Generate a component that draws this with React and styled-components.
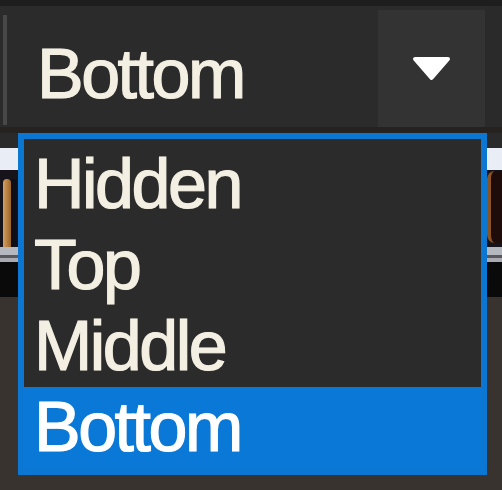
import React from "react";
import styled, { createGlobalStyle } from "styled-components";

const Global = createGlobalStyle`
  html, body { margin: 0; padding: 0; background: #2b2b2b; }
  #root { width: 502px; height: 490px; }
`;

const Page = styled.div`
  position: relative;
  width: 502px;
  height: 490px;
  overflow: hidden;
  display: flex;
  flex-direction: column;
  background: #2b2b2b;
  font-family: "Liberation Sans", Arial, sans-serif;
`;

const TopEdge = styled.div`
  height: 6px;
  background: #1e1e1e;
`;

const ComboRow = styled.div`
  height: 121px;
  display: flex;
  background: #2b2b2b;
  padding-left: 3px;
`;

const LeftRule = styled.div`
  width: 4px;
  margin: 9px 0 2px;
  background: #484848;
`;

const Value = styled.div`
  flex: 1;
  padding: 28px 0 0 30px;
  font-size: 70px;
  line-height: 80px;
  letter-spacing: -2.5px;
  color: #f3efe2;
  -webkit-text-stroke: 1.2px #f3efe2;
  text-shadow: 0 0 1px rgba(243, 239, 226, 0.6);
`;

const DropButton = styled.div`
  width: 107px;
  margin-top: 4px;
  background: #333333;
  display: flex;
  align-items: center;
  justify-content: center;
`;

const RightGap = styled.div`
  width: 17px;
  background: #2a2a2a;
`;

const Separator = styled.div`
  height: 6px;
  background: #26221f;
`;

const Band = styled.div`
  height: ${(p) => p.h}px;
  background: ${(p) => p.bg};
  flex: ${(p) => (p.grow ? 1 : "none")};
  display: flex;
  justify-content: space-between;
  align-items: flex-end;
  overflow: hidden;
`;

const StripeBand = styled.div`
  height: 15px;
  background: linear-gradient(#b6b8c0 0 8px, #58585e 8px 11px, #a9aab2 11px);
`;

const LeftGlyphPiece = styled.div`
  margin-left: 3px;
  width: 8px;
  height: 68px;
  border-radius: 6px 6px 0 0;
  background: linear-gradient(90deg, #d4a060, #9a6428);
  box-shadow: 6px 0 0 #0e0e18;
`;

const RightGlyphPiece = styled.div`
  width: 15px;
  height: 72px;
  border-left: 4px solid #8a5424;
  border-radius: 8px 0 0 8px;
  background: #1e0c0a;
  box-sizing: border-box;
  margin-bottom: 4px;
`;

const List = styled.div`
  position: absolute;
  top: 133px;
  left: 18px;
  width: 469px;
  box-sizing: border-box;
  border: 6px solid #0b77d3;
  background: #2b2b2b;
  padding: 5px 0 1px;
  display: flex;
  flex-direction: column;
`;

const Item = styled.div`
  height: 81px;
  padding-left: 10px;
  font-size: 70px;
  line-height: 80px;
  letter-spacing: -2.5px;
  color: ${(p) => (p.selected ? "#ffffff" : "#f3efe2")};
  -webkit-text-stroke: 1.2px ${(p) => (p.selected ? "#ffffff" : "#f3efe2")};
  text-shadow: 0 0 1px rgba(243, 239, 226, 0.6);
  background: ${(p) => (p.selected ? "#0a78d7" : "transparent")};
  margin-bottom: ${(p) => (p.selected ? "-1px" : "0")};
  padding-bottom: ${(p) => (p.selected ? "1px" : "0")};
`;

const options = ["Hidden", "Top", "Middle", "Bottom"];

export default function App() {
  const selected = "Bottom";
  return (
    <>
      <Global />
      <Page>
        <TopEdge />
        <ComboRow>
          <LeftRule />
          <Value>{selected}</Value>
          <DropButton>
            <svg width="39" height="25" viewBox="0 0 39 25">
              <path
                d="M3 3 H36 L19.5 22 Z"
                fill="#ffffff"
                stroke="#ffffff"
                strokeWidth="4"
                strokeLinejoin="round"
              />
            </svg>
          </DropButton>
          <RightGap />
        </ComboRow>
        <Separator />
        <Band h={15} bg="#2a2a2a" />
        <Band h={22} bg="#e8edf6" />
        <Band h={77} bg="#16141a">
          <LeftGlyphPiece />
          <RightGlyphPiece />
        </Band>
        <StripeBand />
        <Band h={35} bg="#0a0a0a" />
        <Band grow bg="#38332f" />
        <List>
          {options.map((o) => (
            <Item key={o} selected={o === selected}>
              {o}
            </Item>
          ))}
        </List>
      </Page>
    </>
  );
}
